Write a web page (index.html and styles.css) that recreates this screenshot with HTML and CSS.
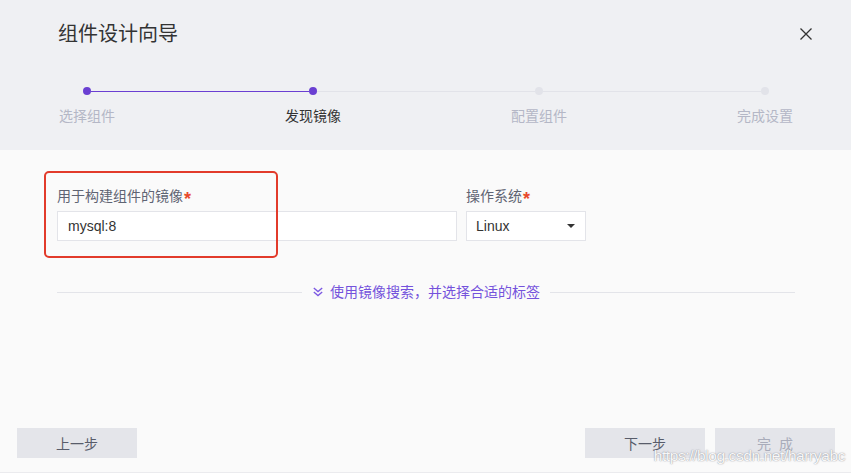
FILE: index.html
```html
<!DOCTYPE html>
<html lang="zh-CN">
<head>
<meta charset="utf-8">
<title>组件设计向导</title>
<link rel="stylesheet" href="styles.css">
</head>
<body>
<div class="dialog">
  <div class="header">
    <div class="title-row">
      <h1 class="title">组件设计向导</h1>
      <svg class="close" width="12" height="12" viewBox="0 0 12 12"><path d="M0.5 0.5 L11.5 11.5 M11.5 0.5 L0.5 11.5" stroke="#333" stroke-width="1.3" fill="none"/></svg>
    </div>
    <div class="track">
      <span class="dot done"></span>
      <span class="seg done"></span>
      <span class="dot done"></span>
      <span class="seg"></span>
      <span class="dot"></span>
      <span class="seg"></span>
      <span class="dot"></span>
    </div>
    <div class="step-labels">
      <span class="step-label">选择组件</span>
      <span class="step-label active">发现镜像</span>
      <span class="step-label">配置组件</span>
      <span class="step-label">完成设置</span>
    </div>
  </div>
  <div class="body">
    <div class="fields">
      <div class="field field-image">
        <label class="label">用于构建组件的镜像<span class="req">*</span></label>
        <div class="input">mysql:8</div>
      </div>
      <div class="field field-os">
        <label class="label">操作系统<span class="req">*</span></label>
        <div class="select"><span>Linux</span><span class="caret"></span></div>
      </div>
    </div>
    <div class="divider">
      <span class="line"></span>
      <span class="more">
        <svg width="10" height="10" viewBox="0 0 10 10"><path d="M0.8 1 L5 4.6 L9.2 1 M0.8 5 L5 8.6 L9.2 5" stroke="#7b58e2" stroke-width="1.3" fill="none"/></svg>
        使用镜像搜索，并选择合适的标签
      </span>
      <span class="line"></span>
    </div>
    <div class="annot"></div>
  </div>
  <div class="footer">
    <button class="btn">上一步</button>
    <div class="right">
      <button class="btn">下一步</button>
      <button class="btn disabled">完&nbsp;&nbsp;成</button>
    </div>
  </div>
  <div class="watermark">https://blog.csdn.net/harryabc</div>
</div>
</body>
</html>
```
FILE: styles.css
```css
* { box-sizing: border-box; }
html, body { margin: 0; padding: 0; background: #fff; }
body {
  font-family: "Liberation Sans", "Noto Sans CJK SC", sans-serif;
  font-size: 14px;
  color: #333;
}
.dialog {
  position: relative;
  width: 851px;
  height: 473px;
  display: flex;
  flex-direction: column;
  border-bottom: 1px solid #ebebee;
  background: #fafafa;
}
.header {
  height: 150px;
  background: #eff0f3;
  flex: none;
}
.title-row {
  display: flex;
  align-items: center;
  justify-content: space-between;
  padding: 22px 39px 0 58px;
  height: 46px;
}
.title {
  margin: 0;
  font-size: 20px;
  font-weight: normal;
  line-height: 24px;
  color: #333;
}
.close { display: block; }
.track {
  display: flex;
  align-items: center;
  margin-top: 41px;
  padding: 0 82px 0 83px;
  height: 8px;
}
.dot {
  width: 8px;
  height: 8px;
  border-radius: 50%;
  background: #e2e3e9;
  flex: none;
}
.dot.done { background: #6a3fd2; }
.seg {
  flex: 1;
  height: 1px;
  background: #e2e3e9;
}
.seg.done { background: #6a3fd2; }
.step-labels {
  display: flex;
  justify-content: space-between;
  padding: 0 58px 0 59px;
  margin-top: 11px;
  line-height: 20px;
}
.step-label { color: #b4b7c6; }
.step-label.active { color: #333; }
.body {
  position: relative;
  flex: 1;
  padding: 36px 56px 0 57px;
}
.fields {
  display: flex;
  gap: 9px;
}
.field { display: flex; flex-direction: column; }
.field-image { width: 400px; }
.field-os { width: 120px; }
.label {
  display: block;
  height: 20px;
  line-height: 20px;
  color: #5f6473;
  margin-bottom: 5px;
}
.req {
  color: #e8492c;
  font-weight: bold;
  font-size: 18px;
  line-height: 0;
  position: relative;
  top: 4px;
  margin-left: 1px;
}
.input, .select {
  height: 30px;
  background: #fff;
  border: 1px solid #e3e4e9;
  display: flex;
  align-items: center;
  color: #333;
}
.input { padding-left: 10px; }
.select {
  padding: 0 9px;
  justify-content: space-between;
}
.caret {
  width: 0;
  height: 0;
  border-left: 4.5px solid transparent;
  border-right: 4.5px solid transparent;
  border-top: 4.5px solid #333;
  margin-right: 1px;
}
.divider {
  display: flex;
  align-items: center;
  margin-top: 41px;
  width: 738px;
  line-height: 20px;
}
.line { flex: 1; height: 1px; background: #e3e4e9; }
.more {
  display: flex;
  align-items: center;
  gap: 7px;
  color: #7452dc;
  padding: 0 10px 0 11px;
}
.more svg { display: block; }
.annot {
  position: absolute;
  left: 44px;
  top: 21px;
  width: 234px;
  height: 87px;
  border: 2px solid #e23b2b;
  border-radius: 5px;
}
.footer {
  display: flex;
  justify-content: space-between;
  padding: 0 16px 14px 17px;
}
.right { display: flex; gap: 10px; }
.btn {
  width: 120px;
  height: 30px;
  border: 0;
  background: #e4e5ea;
  color: #585c6a;
  font-family: inherit;
  font-size: 14px;
  padding: 0;
}
.btn.disabled { color: #a9acba; }
.watermark {
  position: absolute;
  right: 6px;
  bottom: 7px;
  font-size: 15.5px;
  letter-spacing: -0.4px;
  color: rgba(255,255,255,0.95);
  text-shadow: 0 0 1px rgba(110,110,120,0.8), 0 0 2px rgba(150,150,160,0.4);
  font-family: "Liberation Sans", sans-serif;
}
```
